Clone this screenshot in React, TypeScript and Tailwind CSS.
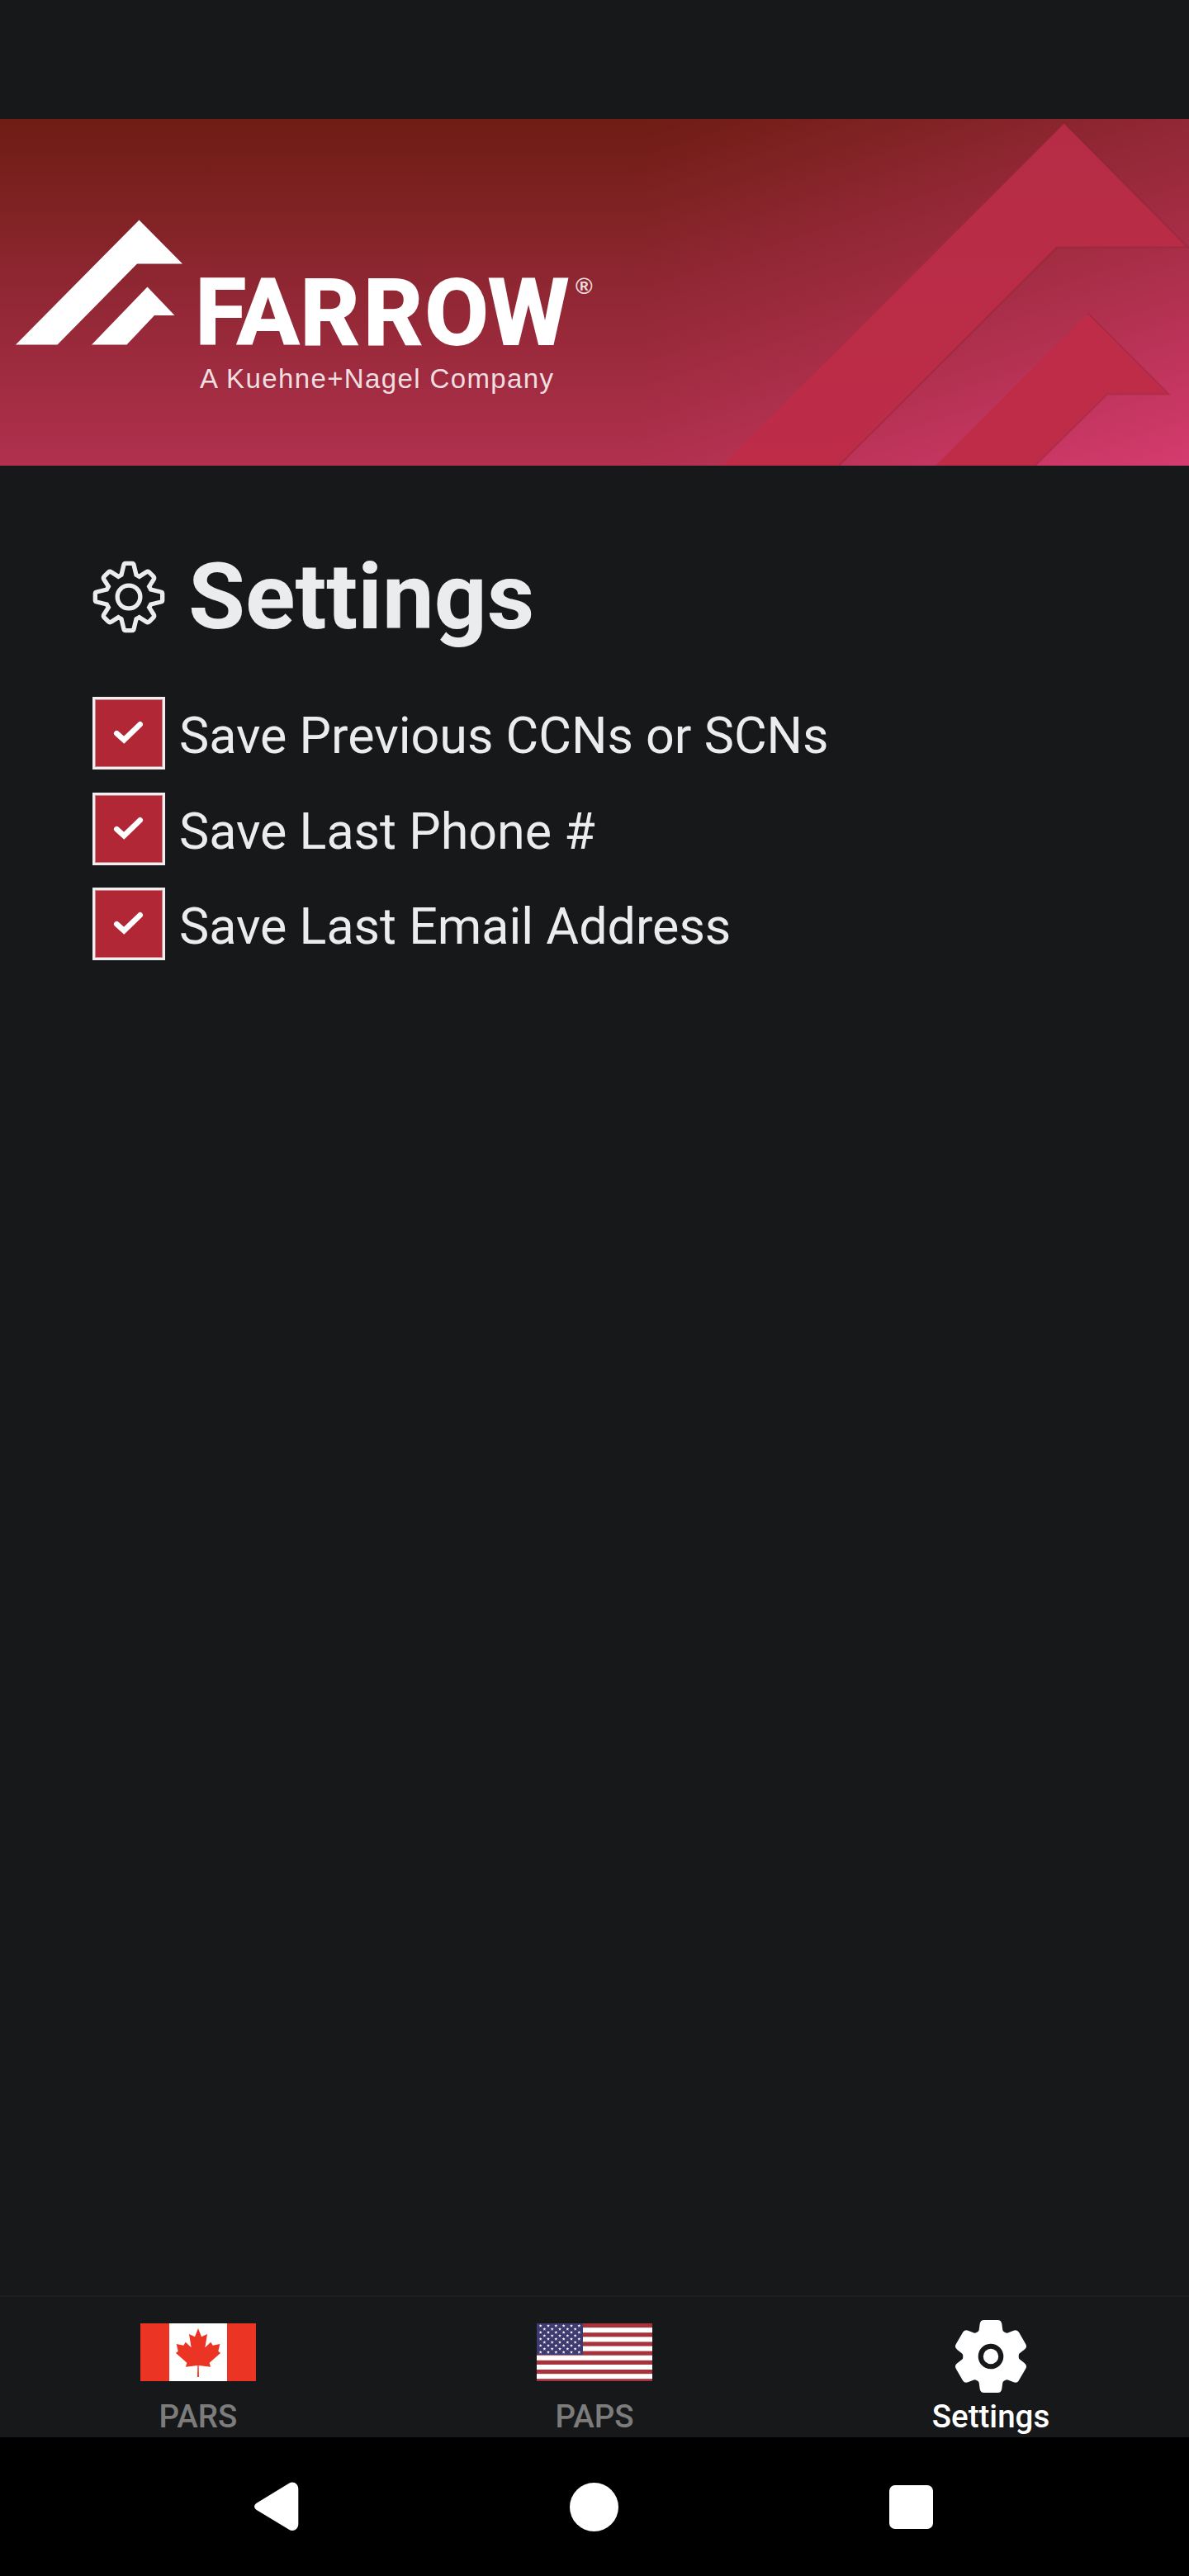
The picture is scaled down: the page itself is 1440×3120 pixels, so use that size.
import { IoSettings } from 'react-icons/io5';

const OPTIONS = ['Save Previous CCNs or SCNs', 'Save Last Phone #', 'Save Last Email Address'];

function Banner() {
  return (
    <svg className="block h-[420px] w-full" viewBox="0 0 1440 420" aria-label="Farrow">
      <defs>
        <linearGradient id="wash" gradientUnits="userSpaceOnUse" x1="0" y1="0" x2="0" y2="420">
          <stop offset="0" stopColor="#6f1d15" />
          <stop offset="0.07" stopColor="#731e18" />
          <stop offset="0.5" stopColor="#902733" />
          <stop offset="1" stopColor="#b0304e" />
        </linearGradient>
        <linearGradient id="glow" gradientUnits="userSpaceOnUse" x1="775" y1="0" x2="965" y2="577">
          <stop offset="0" stopColor="#6f1d15" />
          <stop offset="0.05" stopColor="#731e18" />
          <stop offset="0.33" stopColor="#902733" />
          <stop offset="0.656" stopColor="#b0304e" />
          <stop offset="1" stopColor="#d53b6f" />
        </linearGradient>
        <linearGradient id="arrow" x1="0" y1="0" x2="0" y2="1">
          <stop offset="0" stopColor="#b62c45" />
          <stop offset="1" stopColor="#be2c48" />
        </linearGradient>
      </defs>
      <rect width="1440" height="420" fill="url(#wash)" />
      <rect x="775" width="665" height="420" fill="url(#glow)" />
      <path d="M874.7 420 1289 5.5 1438.5 155.5H1280L1016 420Z" fill="url(#arrow)" />
      <path d="M1289 5.5 1438.5 155.5H1280L1016 420" fill="none" stroke="#7c2238" strokeOpacity="0.3" strokeWidth="2" />
      <path d="M1133 420 1317.8 235.5 1416 333.5H1341L1254 420Z" fill="#be2c48" />
      <path d="M1317.8 235.5 1416 333.5H1341L1254 420" fill="none" stroke="#7c2238" strokeOpacity="0.25" strokeWidth="2" />

      <g fill="#fff">
        <path d="M19 273.5 168.5 122.5 221 175.5H166L69.5 273.5Z" />
        <path d="M111 273.5 178.5 203.5 211.5 238H187L153.5 273.5Z" />
        <text
          x="236.5 287 363.5 440 514.5 591"
          y="272.7"
          stroke="#fff"
          strokeWidth="2"
          className="font-['Roboto'] text-[112px] font-bold"
        >
          FARROW
        </text>
        <text x="697" y="212" className="font-['Liberation_Sans'] text-[28px] font-bold" fillOpacity="0.85">
          ®
        </text>
        <text
          x="242"
          y="326"
          textLength="428"
          className="font-['Liberation_Sans'] text-[33px]"
          fillOpacity="0.85"
        >
          A Kuehne+Nagel Company
        </text>
      </g>
    </svg>
  );
}

function GearOutline() {
  // one quarter of the outline, repeated around the centre
  const side =
    'M0 -122H12Q17 -122 18 -117L27 -80 38 -74 63 -90Q69 -94 74 -90L90 -74Q94 -69 90 -63L74 -38 80 -27 117 -18Q122 -17 122 -12V0';
  return (
    <svg className="size-[88px]" viewBox="-132 -132 264 264" fill="none" stroke="#ebecee" strokeWidth="16">
      {[0, 90, 180, 270].map((angle) => (
        <path key={angle} d={side} transform={`rotate(${angle})`} />
      ))}
      <circle r="41.5" />
    </svg>
  );
}

function CheckboxRow({ label }: { label: string }) {
  return (
    <div className="flex h-[88px] items-center">
      <span className="size-[88px] shrink-0 border-[3px] border-[#efeff1] bg-[#b22735] shadow-[inset_0_0_0_1px_#d08089]">
        <svg className="size-full" viewBox="30 27 246 246" fill="none" stroke="#fff" strokeWidth="20" strokeLinecap="round">
          <path d="M109 151 135.5 174.500 194 118" />
        </svg>
      </span>
      <span className="ml-[17px] pt-1.5 text-[61px] leading-[72px] whitespace-nowrap">{label}</span>
    </div>
  );
}

function CanadaFlag() {
  return (
    <svg className="h-[70px] w-[140px]" viewBox="60 132 420 210">
      <path fill="#fff" d="M60 132h420v210H60z" />
      <path fill="#ec3424" d="M60 132h105v210H60zM375 132h105v210H375z" />
      <path
        fill="#ec3424"
        d="M270 150 282 181 303 171 295 220 316 200 323 212 349 207 343 233 351 240 311 275 315 290 272 285 273 327H267L268 285 225 290 229 275 189 240 197 233 191 207 217 212 224 200 245 220 237 171 258 181Z"
      />
    </svg>
  );
}

function UsaFlag() {
  const stars: [number, number][] = [];
  for (let row = 0; row < 9; row++) {
    const count = row % 2 ? 5 : 6;
    for (let i = 0; i < count; i++) {
      stars.push([(row % 2 ? 88 : 74) + i * 28, 141 + row * 12]);
    }
  }
  return (
    <svg className="h-[70px] w-[140px]" viewBox="60 132 420 210">
      <path fill="#fff" d="M60 132h420v210H60z" />
      {[0, 2, 4, 6, 8, 10, 12].map((n) => (
        <rect key={n} x="60" y={132 + n * 16.8} width="420" height={n === 12 ? 9 : 15.5} fill="#a6323b" />
      ))}
      <path fill="#3f3b70" d="M60 132h168v114H60z" />
      {stars.map(([x, y]) => (
        <path
          key={`${x}-${y}`}
          transform={`translate(${x} ${y})`}
          fill="#fff"
          d="M0 -6 1.5 -2H6L2.4 .8 3.8 5 0 2.6 -3.8 5 -2.4 .8 -6 -2H-1.5Z"
        />
      ))}
    </svg>
  );
}

function TabBar() {
  const label = 'text-[38.5px] leading-[46px] font-medium';
  return (
    <nav className="grid h-[172px] grid-cols-3 border-t-2 border-[#1e1f21]">
      <div className="flex flex-col items-center pt-8">
        <CanadaFlag />
        <span className={`${label} mt-[20px] text-[#7c7c7d]`}>PARS</span>
      </div>
      <div className="flex flex-col items-center pt-8">
        <UsaFlag />
        <span className={`${label} mt-[20px] text-[#7c7c7d]`}>PAPS</span>
      </div>
      <div className="flex flex-col items-center pt-[23px]">
        <IoSettings className="size-[98px] text-white" />
        <span className={`${label} mt-px text-white`}>Settings</span>
      </div>
    </nav>
  );
}

function SystemNav() {
  return (
    <div className="flex h-[168px] items-center justify-between bg-black pr-[310px] pl-[308px]">
      <svg className="h-[60px] w-[54px]" viewBox="0 0 54 60" fill="#fff">
        <path d="M2.7 25.7 42 1.8C47 -1.5 53.3 2 53.3 8.5V51C53.3 57.5 47 61 42 57.7L2.7 34C-.8 31.500 -.8 28 2.7 25.7Z" />
      </svg>
      <span className="size-[59px] rounded-full bg-white" />
      <span className="size-[53px] rounded-[7px] bg-white" />
    </div>
  );
}

export default function App() {
  return (
    <div className="flex h-[3120px] w-[1440px] flex-col bg-[#17181a] pt-[144px] font-['Roboto',sans-serif] text-[#ebecee]">
      <Banner />
      <main className="flex-1 px-[112px] pt-[93px]">
        <div className="flex h-[132px] items-center gap-[28px]">
          <GearOutline />
          <h1 className="text-[112px] leading-[132px] font-bold">Settings</h1>
        </div>
        <div className="mt-[55px] flex flex-col gap-[27.5px]">
          {OPTIONS.map((option) => (
            <CheckboxRow key={option} label={option} />
          ))}
        </div>
      </main>
      <TabBar />
      <SystemNav />
    </div>
  );
}
